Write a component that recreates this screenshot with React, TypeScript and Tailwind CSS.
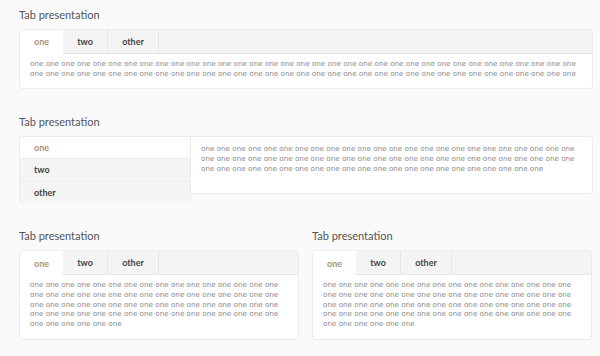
import React, { useState } from "react";

const FONT = { fontFamily: "Lato, 'Open Sans', sans-serif" };
const BODY = { fontFamily: "'DejaVu Sans', Verdana, sans-serif" };

const TEXT = Array(70).fill("one").join(" ");
const TABS = ["one", "two", "other"];

const Title = ({ children }: { children: React.ReactNode }) => (
  <h2 className="mb-[7px] text-[11px] leading-[14px] text-[#555]">{children}</h2>
);

const HorizontalTabs = () => {
  const [active, setActive] = useState(0);
  return (
    <div className="overflow-hidden rounded-[3px] border border-[#ececec] bg-white">
      <div className="flex h-6 bg-[#f4f4f4]">
        {TABS.map((tab, idx) => (
          <button
            key={tab}
            onClick={() => setActive(idx)}
            className={`px-[14px] text-[9px] font-bold ${
              idx === active
                ? "border-r border-white bg-white text-[#a8957a]"
                : "border-r border-b border-[#e6e6e6] text-[#444]"
            } ${idx === 0 ? "w-[43px]" : idx === 1 ? "w-[45px]" : "w-[51px]"}`}
          >
            {tab}
          </button>
        ))}
        <div className="flex-1 border-b border-[#e6e6e6]" />
      </div>
      <p
        className="px-[10px] pt-[5px] pb-[10px] text-[7.2px] leading-[9.65px] text-[#8a8a8a]"
        style={BODY}
      >
        {TEXT}
      </p>
    </div>
  );
};

const VerticalTabs = () => {
  const [active, setActive] = useState(0);
  return (
    <div className="flex items-start">
      <div className="w-[172px] shrink-0 overflow-hidden rounded-tl-[3px] border-t border-l border-[#ececec]">
        {TABS.map((tab, idx) => (
          <button
            key={tab}
            onClick={() => setActive(idx)}
            className={`flex w-full items-center px-[14px] text-[9px] font-bold ${
              idx === 0 ? "h-[21px]" : "h-[22.5px]"
            } ${
              idx === active
                ? "bg-white text-[#a8957a]"
                : "border-t border-[#ececec] bg-[#f4f4f4] text-[#444]"
            }`}
          >
            {tab}
          </button>
        ))}
      </div>
      <div className="-ml-px flex-1 rounded-r-[3px] border border-l-0 border-[#ececec] bg-white">
        <p
          className="h-[56px] border-l border-[#ececec] px-[10px] pt-[7px] text-[7.2px] leading-[9.65px] text-[#8a8a8a]"
          style={BODY}
        >
          {TEXT}
        </p>
      </div>
    </div>
  );
};

export default function App() {
  return (
    <div className="min-h-[356px] bg-[#fafafa] pt-[8px] pr-[7px] pl-[19px]" style={FONT}>
      <section>
        <Title>Tab presentation</Title>
        <HorizontalTabs />
      </section>
      <section className="mt-[26px]">
        <Title>Tab presentation</Title>
        <VerticalTabs />
      </section>
      <section className="mt-[26px] grid grid-cols-2 gap-[13px] pr-[1px]">
        <div>
          <Title>Tab presentation</Title>
          <HorizontalTabs />
        </div>
        <div>
          <Title>Tab presentation</Title>
          <HorizontalTabs />
        </div>
      </section>
    </div>
  );
}
